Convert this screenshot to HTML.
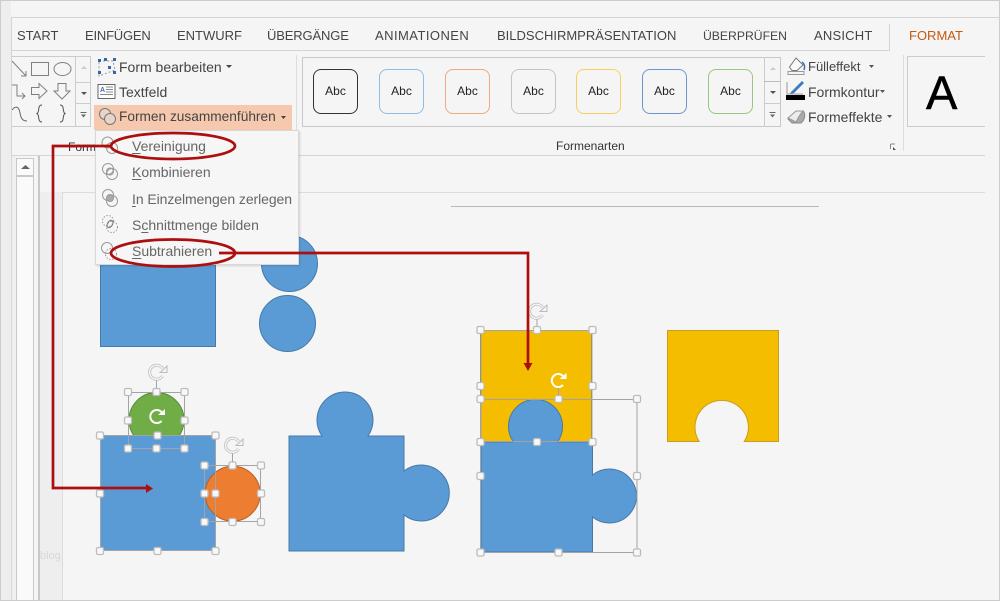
<!DOCTYPE html>
<html><head><meta charset="utf-8">
<style>
html,body{margin:0;padding:0;background:#f5f5f5}
#p{position:relative;width:1000px;height:601px;overflow:hidden;background:#f5f5f5;font-family:"Liberation Sans",sans-serif;color:#444}
#p div{position:absolute}
.t{white-space:nowrap;font-size:13px;line-height:16px;color:#444}
.r{white-space:nowrap;font-size:14px;line-height:16px;color:#444}
.m{white-space:nowrap;font-size:14px;line-height:16px;color:#666}
.m u{text-decoration-thickness:1px;text-underline-offset:2px}
.abc{width:43px;height:43px;border-radius:8px;font-size:12px;line-height:42px;text-align:center;color:#222;border:1px solid #888}
svg{position:absolute;left:0;top:0}
</style></head><body>
<div id="p">
<!-- frame -->
<div style="left:0;top:0;width:1000px;height:1px;background:#ccc"></div>
<div style="left:0;top:600px;width:1000px;height:1px;background:#ccc"></div>
<div style="left:999px;top:0;width:1px;height:601px;background:#ccc"></div>
<div style="left:0;top:0;width:1px;height:601px;background:#ccc"></div>
<div style="left:1px;top:1px;width:10px;height:599px;background:#eee"></div>
<div style="left:11px;top:17px;width:989px;height:1px;background:#d4d4d4"></div>
<div style="left:11px;top:17px;width:1px;height:139px;background:#d4d4d4"></div>
<div style="left:12px;top:50px;width:877px;height:1px;background:#d4d4d4"></div>
<div style="left:889px;top:24px;width:1px;height:27px;background:#d4d4d4"></div>
<!-- tabs -->
<div class="t" style="left:17px;top:28px">START</div>
<div class="t" style="left:85px;top:28px;letter-spacing:-.2px">EINFÜGEN</div>
<div class="t" style="left:177px;top:28px">ENTWURF</div>
<div class="t" style="left:267px;top:28px;letter-spacing:-.15px">ÜBERGÄNGE</div>
<div class="t" style="left:375px;top:28px;letter-spacing:.45px">ANIMATIONEN</div>
<div class="t" style="left:497px;top:28px">BILDSCHIRMPRÄSENTATION</div>
<div class="t" style="left:703px;top:28px;font-size:12.2px">ÜBERPRÜFEN</div>
<div class="t" style="left:814px;top:28px;letter-spacing:.2px">ANSICHT</div>
<div class="t" style="left:909px;top:28px;color:#c55a11">FORMAT</div>
<!-- ribbon bottom -->
<div style="left:12px;top:155px;width:973px;height:1px;background:#d4d4d4"></div>
<div style="left:62px;top:192px;width:923px;height:1px;background:#dcdcdc"></div>
<!-- shape gallery -->
<div style="left:12px;top:56px;width:79px;height:71px;border:1px solid #ccc;border-left:0;box-sizing:border-box"></div>
<div style="left:75px;top:56px;width:1px;height:71px;background:#ccc"></div>
<div style="left:75px;top:82px;width:16px;height:1px;background:#ccc"></div>
<div style="left:75px;top:103px;width:16px;height:1px;background:#ccc"></div>
<div style="left:296px;top:55px;width:1px;height:75px;background:#ddd"></div>
<div style="left:94px;top:105px;width:198px;height:25px;background:#f6c9ae"></div>
<div class="r" style="left:119px;top:59px">Form bearbeiten</div>
<div class="r" style="left:119px;top:84px">Textfeld</div>
<div class="r" style="left:119px;top:109px;font-size:13.7px">Formen zusammenführen</div>
<div class="t" style="left:68px;top:139px;font-size:12px;color:#333">Form</div>
<!-- style gallery -->
<div style="left:302px;top:57px;width:479px;height:70px;border:1px solid #c8c8c8;box-sizing:border-box"></div>
<div style="left:764px;top:57px;width:1px;height:70px;background:#ccc"></div>
<div style="left:764px;top:81px;width:17px;height:1px;background:#bbb"></div>
<div style="left:764px;top:103px;width:17px;height:1px;background:#ccc"></div>
<div class="abc" style="left:313px;top:69px;border-color:#333">Abc</div>
<div class="abc" style="left:379px;top:69px;border-color:#8fbde6">Abc</div>
<div class="abc" style="left:445px;top:69px;border-color:#efa97c">Abc</div>
<div class="abc" style="left:511px;top:69px;border-color:#c4c4c4">Abc</div>
<div class="abc" style="left:576px;top:69px;border-color:#f8cf5c">Abc</div>
<div class="abc" style="left:642px;top:69px;border-color:#6f95cf">Abc</div>
<div class="abc" style="left:708px;top:69px;border-color:#98c783">Abc</div>
<div style="left:556px;top:139px;font-size:12px;line-height:14px;color:#333;white-space:nowrap">Formenarten</div>
<div class="r" style="left:808px;top:59px;font-size:13px">Fülleffekt</div>
<div class="r" style="left:808px;top:84px">Formkontur</div>
<div class="r" style="left:808px;top:109px">Formeffekte</div>
<div style="left:903px;top:55px;width:1px;height:96px;background:#ddd"></div>
<div style="left:907px;top:56px;width:78px;height:71px;border:1px solid #ccc;border-right:0;box-sizing:border-box"></div>
<div style="left:926px;top:65px;font-size:47px;line-height:56px;color:#000;-webkit-text-stroke:.5px #000">A</div>
<!-- left ruler -->
<div style="left:11px;top:156px;width:1px;height:444px;background:#d8d8d8"></div>
<div style="left:12px;top:156px;width:4px;height:444px;background:#f0f0f0"></div>
<div style="left:16px;top:158px;width:18px;height:442px;border:1.5px solid #c8c8c8;border-bottom:0;box-sizing:border-box;background:#fafafa"></div>
<div style="left:16px;top:175px;width:18px;height:2px;background:#c8c8c8"></div>
<div style="left:38px;top:156px;width:1.5px;height:444px;background:#c8c8c8"></div>
<div style="left:40px;top:192px;width:22px;height:408px;background:#eee"></div>
<div style="left:62px;top:192px;width:1px;height:408px;background:#dcdcdc"></div>
<div style="left:40px;top:549px;font-size:11px;color:#d8d8d8;line-height:14px">blog</div>
<div style="left:451px;top:206px;width:368px;height:1px;background:#b8b8b8"></div>

<svg width="1000" height="601" viewBox="0 0 1000 601" fill="none">
<path d="M21 169L25.500 165L30 169Z" fill="#666"/>
<!-- shape gallery glyphs -->
<g stroke="#808080" stroke-width="1" fill="none">
<path d="M12 61L26 76M26 71V76H21"/>
<rect x="31.500" y="62.500" width="17" height="13"/>
<ellipse cx="62.500" cy="69" rx="8.500" ry="6.500"/>
<path d="M12 85H17V96H25M22 93L25 96L22 99"/>
<path d="M31.500 87.500H39V83.500L47 91L39 98.500V94.500H31.500Z"/>
<path d="M58 83.500H66V91H70L62 99L54 91H58Z"/>
<path d="M12 110C16 105 19 107 20 113C21 119 23 121 27 121" stroke="#666"/>
<path d="M42 105C37 105 40 112 37 113.500C40 115 37 122 42 122M60 105C65 105 62 112 65 113.500C62 115 65 122 60 122" stroke="#555"/>
</g>
<path d="M81 69L84 66L87 69Z" fill="#ccc"/><path d="M81 92H87L84 95Z" fill="#555"/>
<path d="M80.500 112.500H86.500" stroke="#666"/><path d="M81 114.500H86L83.500 117.500Z" fill="#666"/>
<!-- style scroll -->
<path d="M770 70L773 67L776 70Z" fill="#ccc"/><path d="M770 91H776L773 94Z" fill="#555"/>
<path d="M769.500 112.500H775.500" stroke="#666"/><path d="M770 114.500H775L772.500 117.500Z" fill="#666"/>
<!-- Form bearbeiten icon -->
<path d="M99 61H113L115 70L107 73L99 76Z" stroke="#999" stroke-width="1" stroke-dasharray="2 2"/>
<g fill="#3a66a8"><rect x="98" y="59" width="3" height="3"/><rect x="104" y="58" width="3" height="3"/><rect x="113" y="58" width="3" height="3"/><rect x="108" y="66" width="3" height="3"/><rect x="98" y="71" width="3" height="3"/><rect x="113" y="71" width="3" height="3"/></g>
<path d="M226 65H232L229 68Z M281 116H286L283.500 119Z" fill="#444"/>
<!-- Textfeld icon -->
<rect x="98" y="84.500" width="17" height="14" fill="#fff" stroke="#666"/>
<text x="100" y="92" font-family="Liberation Sans" font-size="7" font-weight="bold" fill="#3b72b5">A</text>
<path d="M106 87H113M106 89.500H113M106 92H113M100 94.500H113" stroke="#888"/>
<!-- Merge icon on button -->
<g stroke="#777" fill="#e6d5cb"><circle cx="105" cy="114" r="5.500"/><circle cx="110" cy="119" r="5.500"/></g>
<!-- dialog launcher & right icons -->
<path d="M890.500 144V149M890.500 144H895" stroke="#888"/><path d="M893 147L896 150H893Z" fill="#555"/>
<path d="M788 71.500H804V74.500H788Z" fill="#f4f4f4" stroke="#999"/>
<path d="M796 58L803 65L797 70.500H792L789.500 67Z" fill="#fafafa" stroke="#777"/>
<path d="M802 62C805 64 805 67 804 70" stroke="#3b72b5" stroke-width="1.500"/>
<path d="M787 82V94H803" stroke="#999"/>
<path d="M791 92L802 81L804 83L794 93L790 94Z" fill="#3a7cc4"/>
<rect x="786" y="95" width="19" height="5" fill="#000"/>
<path d="M796 111H803C806 113 805 120 801 123H792L788 119Z" fill="#aaa" stroke="#888"/>
<path d="M796 111L788 118L796 122C798 118 800 114 803 111Z" fill="#ececec" stroke="#999"/>
<path d="M869 65H874L871.500 68Z M880 90H885L882.500 93Z M887 115H892L889.500 118Z" fill="#555"/>

<!-- SHAPES -->
<g fill="#5b9bd5" stroke="#4579a8" stroke-width="1">
<circle cx="289.500" cy="263.500" r="28"/>
<circle cx="287.500" cy="323.500" r="28"/>
<rect x="100.500" y="235.500" width="115" height="111"/>
</g>
<circle cx="156.500" cy="420" r="27.500" fill="#70ad47" stroke="#56893a"/>
<rect x="100.500" y="435.500" width="115" height="115" fill="#5b9bd5" stroke="#4579a8"/>
<circle cx="232.700" cy="493.700" r="27.500" fill="#ed7d31" stroke="#b86024"/>

<!-- puzzle -->
<path d="M289 436H322A28 28 0 1 1 368 436H404V471A28 28 0 1 1 404 515V551H289Z" fill="#5b9bd5" stroke="#4579a8"/>
<!-- yellow result -->
<path d="M667.500 330.500H778.500V441.500H744.200A26.700 26.700 0 1 0 699.200 441.500H667.500Z" fill="#f5bd00" stroke="#c89e20"/>
<!-- yellow w/ puzzle -->
<rect x="480.500" y="330.500" width="111" height="111" fill="#f5bd00" stroke="#8d8440"/>
<path d="M481 442H513.500A27 27 0 1 1 557.500 442H592.500V475A27 27 0 1 1 592.500 517V552H481Z" fill="#5b9bd5" stroke="#4579a8"/>

<!-- selection lines -->
<g stroke="#a3a3a3" stroke-width="1" fill="none">
<rect x="128.500" y="392.500" width="56" height="56"/>
<path d="M156.500 379V392"/>
<rect x="100.500" y="435.500" width="115" height="115"/>
<rect x="204.500" y="465.500" width="56" height="56"/>
<path d="M232.500 452V465"/>
<path d="M481 330.500H592V441.500H481Z"/>
<path d="M537 318V330"/>
<path d="M480.500 399.500H637V552.500H480.500Z"/>
<path d="M558.500 388V399"/>
</g>
<!-- rotate icons -->
<g fill="none" stroke="#bbb" stroke-width="3">
<path d="M162.500 376A7 7 0 1 1 162.500 368.500"/>
<path d="M238.500 449A7 7 0 1 1 238.500 441.500"/>
<path d="M542.500 315A7 7 0 1 1 542.500 307.500"/>
</g>
<g fill="none" stroke="#f5f5f5" stroke-width="1.500">
<path d="M162.500 376A7 7 0 1 1 162.500 368.500"/>
<path d="M238.500 449A7 7 0 1 1 238.500 441.500"/>
<path d="M542.500 315A7 7 0 1 1 542.500 307.500"/>
</g>
<path d="M160 372.500H167V366Z M236 445.500H243V439Z M540 311.500H547V305Z" fill="#f5f5f5" stroke="#bbb"/>
<g fill="none" stroke="#fff" stroke-width="2">
<path d="M161.500 421A6.500 6.500 0 1 1 161.500 412"/>
<path d="M563 385A6.500 6.500 0 1 1 563 376"/>
</g>
<path d="M158 415H165V409Z M559.500 379H566.500V373Z" fill="#fff"/>
<!-- handles -->
<g fill="#f8f8f8" stroke="#bcbcbc" stroke-width="1.300">
<rect x="124.500" y="388.500" width="7" height="7" rx="1.500"/><rect x="153" y="388.500" width="7" height="7" rx="1.500"/><rect x="181" y="388.500" width="7" height="7" rx="1.500"/>
<rect x="124.500" y="417" width="7" height="7" rx="1.500"/><rect x="181" y="417" width="7" height="7" rx="1.500"/>
<rect x="124.500" y="445" width="7" height="7" rx="1.500"/><rect x="153" y="445" width="7" height="7" rx="1.500"/><rect x="181" y="445" width="7" height="7" rx="1.500"/>
<rect x="96.500" y="432" width="7" height="7" rx="1.500"/><rect x="154" y="432" width="7" height="7" rx="1.500"/><rect x="212" y="432" width="7" height="7" rx="1.500"/>
<rect x="96.500" y="490" width="7" height="7" rx="1.500"/><rect x="212" y="490" width="7" height="7" rx="1.500"/>
<rect x="96.500" y="547.500" width="7" height="7" rx="1.500"/><rect x="154" y="547.500" width="7" height="7" rx="1.500"/><rect x="212" y="547.500" width="7" height="7" rx="1.500"/>
<rect x="201" y="462" width="7" height="7" rx="1.500"/><rect x="229" y="462" width="7" height="7" rx="1.500"/><rect x="257.500" y="462" width="7" height="7" rx="1.500"/>
<rect x="201" y="490" width="7" height="7" rx="1.500"/><rect x="257.500" y="490" width="7" height="7" rx="1.500"/>
<rect x="201" y="518.500" width="7" height="7" rx="1.500"/><rect x="229" y="518.500" width="7" height="7" rx="1.500"/><rect x="257.500" y="518.500" width="7" height="7" rx="1.500"/>
<rect x="477" y="326.500" width="7" height="7" rx="1.500"/><rect x="533.500" y="326.500" width="7" height="7" rx="1.500"/><rect x="589" y="326.500" width="7" height="7" rx="1.500"/>
<rect x="477" y="382.500" width="7" height="7" rx="1.500"/><rect x="589" y="382.500" width="7" height="7" rx="1.500"/>
<rect x="477" y="395.500" width="7" height="7" rx="1.500"/><rect x="555" y="395.500" width="7" height="7" rx="1.500"/><rect x="633.500" y="395.500" width="7" height="7" rx="1.500"/>
<rect x="477" y="438.500" width="7" height="7" rx="1.500"/><rect x="533.500" y="438.500" width="7" height="7" rx="1.500"/><rect x="589" y="438.500" width="7" height="7" rx="1.500"/>
<rect x="477" y="472.500" width="7" height="7" rx="1.500"/><rect x="633.500" y="472.500" width="7" height="7" rx="1.500"/>
<rect x="477" y="549" width="7" height="7" rx="1.500"/><rect x="555" y="549" width="7" height="7" rx="1.500"/><rect x="633.500" y="549" width="7" height="7" rx="1.500"/>
</g>
</svg>

<!-- dropdown -->
<div style="left:95px;top:130px;width:204px;height:135px;background:#f6f6f6;border:1px solid #d8d8d8;box-sizing:border-box;box-shadow:1px 1px 2px rgba(0,0,0,.15)"></div>
<div class="m" style="left:132px;top:138px"><u>V</u>ereinigung</div>
<div class="m" style="left:132px;top:164px"><u>K</u>ombinieren</div>
<div class="m" style="left:132px;top:191px;letter-spacing:-.08px"><u>I</u>n Einzelmengen zerlegen</div>
<div class="m" style="left:132px;top:217px">S<u>c</u>hnittmenge bilden</div>
<div class="m" style="left:132px;top:243px"><u>S</u>ubtrahieren</div>

<svg width="1000" height="601" viewBox="0 0 1000 601" fill="none">
<g stroke="#999" fill="none">
<circle cx="107.500" cy="142.500" r="5.500"/><circle cx="112" cy="148" r="5.500"/>
<circle cx="108" cy="169" r="5.500"/><circle cx="112" cy="174" r="5.500"/><circle cx="110" cy="171.500" r="3.500"/>
<circle cx="108" cy="195" r="5.500"/><circle cx="112" cy="201" r="5.500"/><circle cx="110" cy="198" r="3.500" fill="#aaa"/>
<circle cx="108" cy="221" r="5.500" stroke-dasharray="1.500 1.500"/><circle cx="112" cy="227" r="5.500" stroke-dasharray="1.500 1.500"/><ellipse cx="110" cy="224" rx="2.500" ry="4" transform="rotate(30 110 224)" stroke="#777"/>
<circle cx="107" cy="248" r="5.500"/><circle cx="111" cy="254" r="5.500" stroke-dasharray="1.500 1.500"/>
</g>
<!-- red annotations -->
<g stroke="#ad0f0f" stroke-width="2.700" fill="none">
<ellipse cx="173" cy="146" rx="62" ry="13"/>
<ellipse cx="173" cy="253" rx="62" ry="13.500"/>
<path d="M111 146H53V488H146"/>
<path d="M219 253H528V364"/>
</g>
<path d="M146 484L153 488.500L146 493Z M523.500 363L528 371L532.500 363Z" fill="#ad0f0f"/>
</svg>
</div>
</body></html>
